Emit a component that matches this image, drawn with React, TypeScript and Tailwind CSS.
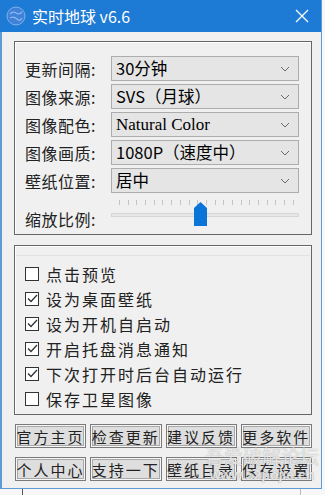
import React from "react";

const CJK = '"Noto Sans CJK SC", "Noto Sans", sans-serif';

function Chevron() {
  return (
    <svg width="10" height="6" viewBox="0 0 10 6" className="shrink-0">
      <polyline points="1,1 5,5 9,1" fill="none" stroke="#6a6a6a" strokeWidth="1" />
    </svg>
  );
}

function Select({ value, serif }: { value: string; serif?: boolean }) {
  return (
    <div className="flex-1 h-[25px] bg-[#e5e5e5] border border-[#adadad] flex items-center pl-[4px] pr-[8px]">
      <span
        className={serif ? "flex-1 text-[17px] text-black leading-none" : "flex-1 text-[16.5px] text-black leading-none"}
        style={{ fontFamily: serif ? '"Liberation Serif", serif' : CJK }}
      >
        {value}
      </span>
      <Chevron />
    </div>
  );
}

function Row({ label, value, serif }: { label: string; value: string; serif?: boolean }) {
  return (
    <div className="flex items-center h-[25px]">
      <span className="w-[86px] shrink-0 text-[16px] text-[#222] leading-none tracking-[0.5px]" style={{ fontFamily: CJK }}>
        {label}
      </span>
      <Select value={value} serif={serif} />
    </div>
  );
}

function Check({ label, checked }: { label: string; checked?: boolean }) {
  return (
    <div className="flex items-center h-[25px]">
      <div className="w-[14px] h-[14px] border border-[#333] bg-white flex items-center justify-center">
        {checked && (
          <svg width="11" height="9" viewBox="0 0 11 9">
            <polyline points="1,4.5 4,7.5 10,1" fill="none" stroke="#333" strokeWidth="1.3" />
          </svg>
        )}
      </div>
      <span className="ml-[7px] text-[16px] text-[#222] leading-none tracking-[2px]" style={{ fontFamily: CJK }}>
        {label}
      </span>
    </div>
  );
}

function Btn({ label }: { label: string }) {
  return (
    <div className="h-[24px] border border-[#7a7a7a] bg-[#dedede] flex items-center justify-center shadow-[inset_0_0_0_1px_#f6f6f6,inset_0_0_0_2px_#a8a8a8]">
      <span className="text-[15px] text-[#222] leading-none tracking-[2px]" style={{ fontFamily: CJK }}>
        {label}
      </span>
    </div>
  );
}

export default function App() {
  const ticks = Array.from({ length: 21 }, (_, i) => i);
  const zoomPct = 44;
  return (
    <div className="w-[325px] h-[495px] bg-[#f7f7f7] relative overflow-hidden">
      <div className="w-[322px] h-[489px] flex flex-col bg-[#f0f0f0] border-l-[2px] border-r border-b border-[#5d9ad6]">
        {/* Title bar */}
        <div className="h-[32px] bg-[#1d7ad5] flex items-center pl-[6px] pr-[12px] -ml-[2px]">
          <svg width="20" height="20" viewBox="0 0 20 20" className="shrink-0">
            <circle cx="10" cy="10" r="9" fill="#3f82d8" />
            <circle cx="10" cy="10" r="9" fill="none" stroke="#7fb0ec" strokeWidth="1" />
            <path d="M4 8 Q7 5 10 7 T16 6" fill="none" stroke="#8ab8f0" strokeWidth="1.3" />
            <path d="M4 12 Q8 10 11 13 T16 12" fill="none" stroke="#8ab8f0" strokeWidth="1.3" />
          </svg>
          <span className="ml-[6px] text-white text-[16px] leading-none" style={{ fontFamily: CJK }}>
            实时地球 v6.6
          </span>
          <div className="flex-1" />
          <svg width="14" height="14" viewBox="0 0 14 14">
            <path d="M1 1 L13 13 M13 1 L1 13" stroke="#ffffff" strokeWidth="1.3" />
          </svg>
        </div>

        {/* Group 1 */}
        <div className="ml-[12px] mr-[9px] mt-[9px] h-[194px] border border-[#666] shadow-[inset_1px_1px_0_#ffffff] pt-[14px] pl-[10px] pr-[12px] flex flex-col gap-[3px]">
          <Row label="更新间隔:" value="30分钟" />
          <Row label="图像来源:" value="SVS（月球）" />
          <Row label="图像配色:" value="Natural Color" serif />
          <Row label="图像画质:" value="1080P（速度中）" />
          <Row label="壁纸位置:" value="居中" />
          <div className="flex items-center h-[34px] mt-[2px]">
            <span className="w-[86px] shrink-0 text-[16px] text-[#222] leading-none tracking-[0.5px] mt-[8px]" style={{ fontFamily: CJK }}>
              缩放比例:
            </span>
            <div className="flex-1 relative h-[34px]">
              <div className="absolute left-[8px] right-[5px] top-[2px] flex justify-between">
                {ticks.map((t) => (
                  <div key={t} className="w-px h-[5px] bg-[#c4c4c4]" />
                ))}
              </div>
              <div className="absolute left-0 right-0 top-[15px] h-[4px] bg-[#e7e7e7] border border-[#d6d6d6]" />
              <svg
                className="absolute top-[4px]"
                style={{ left: `${zoomPct}%` }}
                width="13"
                height="24"
                viewBox="0 0 13 24"
              >
                <path d="M0 6 L6.5 0 L13 6 L13 24 L0 24 Z" fill="#0a74d8" />
              </svg>
            </div>
          </div>
        </div>

        {/* Group 2 */}
        <div className="ml-[12px] mr-[9px] mt-[10px] h-[170px] border border-[#666] shadow-[inset_1px_1px_0_#ffffff] relative pt-[15px] pl-[10px]">
          <div className="absolute left-[1px] right-[1px] top-[9px] h-px bg-[#e2e2e2]" />
          <Check label="点击预览" />
          <Check label="设为桌面壁纸" checked />
          <Check label="设为开机自启动" checked />
          <Check label="开启托盘消息通知" checked />
          <Check label="下次打开时后台自动运行" checked />
          <Check label="保存卫星图像" />
        </div>

        {/* Buttons */}
        <div className="ml-[13px] mr-[9px] mt-[9px] grid grid-cols-4 gap-x-[4px] gap-y-[9px]">
          <Btn label="官方主页" />
          <Btn label="检查更新" />
          <Btn label="建议反馈" />
          <Btn label="更多软件" />
          <Btn label="个人中心" />
          <Btn label="支持一下" />
          <Btn label="壁纸目录" />
          <Btn label="保存设置" />
        </div>
      </div>

      {/* bottom remnant */}
      <div className="absolute left-[22px] top-[489px] w-px h-[6px] bg-[#555]" />
      <div className="absolute left-[300px] top-[489px] w-px h-[6px] bg-[#bbb]" />

      {/* watermark */}
      <div className="absolute left-[205px] top-[446px] w-[114px] pointer-events-none flex flex-col items-center">
        <span
          className="text-[19px] leading-none text-white/75"
          style={{ fontFamily: CJK, textShadow: "0 0 1px rgba(110,110,110,0.7)" }}
        >
          吾爱破解论坛
        </span>
        <span
          className="text-[14px] leading-none text-white/75 mt-[3px] font-bold"
          style={{ fontFamily: '"Liberation Sans", sans-serif', textShadow: "0 0 1px rgba(110,110,110,0.7)" }}
        >
          www.52pojie.cn
        </span>
      </div>
    </div>
  );
}
